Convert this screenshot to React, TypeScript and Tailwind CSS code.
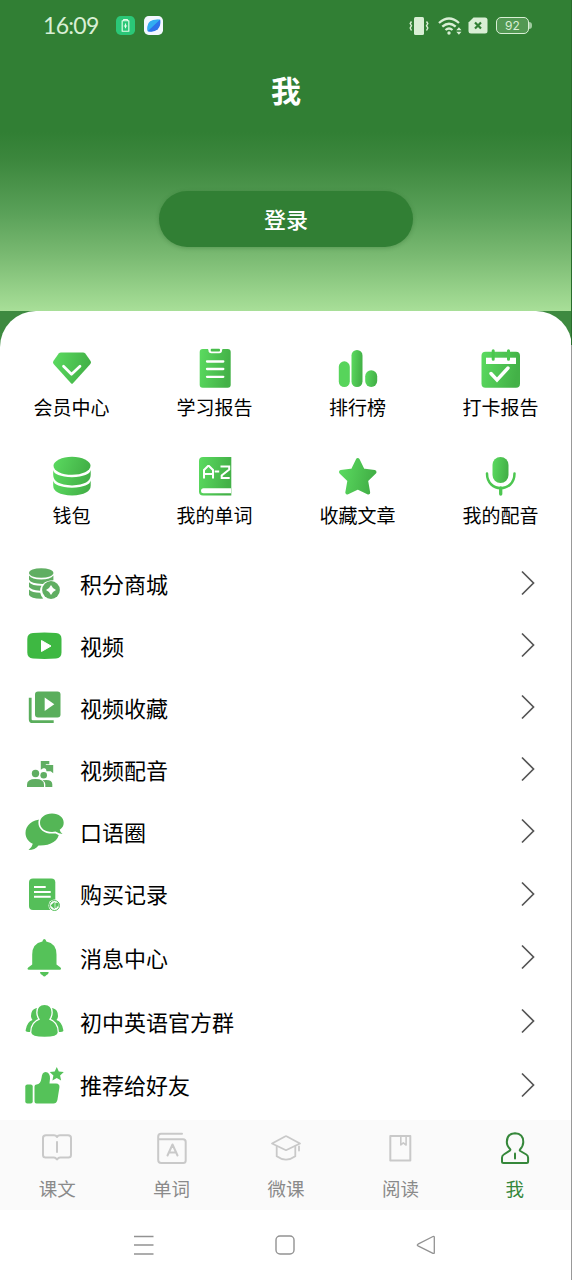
import React from "react";

type IconProps = { children: React.ReactNode };

const Icon40 = ({ children }: IconProps) => (
  <svg viewBox="0 0 40 40" className="size-10 shrink-0 overflow-visible">
    {children}
  </svg>
);

const Icon32 = ({ children }: IconProps) => (
  <svg
    viewBox="0 0 32 32"
    className="size-8 shrink-0 overflow-visible"
    fill="none"
    stroke="currentColor"
    strokeWidth="2"
    strokeLinejoin="round"
    strokeLinecap="round"
  >
    {children}
  </svg>
);

const G = "url(#leaf)";

const shortcuts = [
  {
    label: "会员中心",
    icon: (
      <>
        <path d="M9 4.500h22q1.400 0 2.300 1l5.300 7.500q1 1.500-.2 3L21 35.300q-1 1-2 0L1.600 16q-1.200-1.500-.2-3L6.700 5.500q.9-1 2.300-1z" fill={G} />
        <path d="M11.500 18.300l8 8 8.500-8" fill="none" stroke="#fff" strokeWidth="2.700" strokeLinecap="round" strokeLinejoin="round" />
      </>
    ),
  },
  {
    label: "学习报告",
    icon: (
      <>
        <rect x="4.700" y="1" width="31" height="38.700" rx="3" fill={G} />
        <path d="M11.500 0q2 .8 2 2.500 0 2.700 2.700 2.700h8q2.800 0 2.800-2.700 0-1.700 2-2.500z" fill="#fff" />
        <rect x="15.700" y=".8" width="9.300" height="2.700" rx=".9" fill="#48bd4b" />
        <path d="M12 13.500h16.300M12 21h16.300M12 28.800h16.300" stroke="#fff" strokeWidth="2.300" strokeLinecap="round" />
      </>
    ),
  },
  {
    label: "排行榜",
    icon: (
      <>
        <rect x=".8" y="13.300" width="11" height="25.700" rx="5.500" fill="#57d45b" />
        <rect x="13.500" y="2" width="11" height="37" rx="5.500" fill={G} />
        <rect x="27.200" y="22.300" width="12" height="16.700" rx="6" fill={G} />
      </>
    ),
  },
  {
    label: "打卡报告",
    icon: (
      <>
        <rect x=".5" y="3.700" width="38.500" height="36" rx="4" fill={G} />
        <path d="M5 9.700h30v6.300H5z" fill="#fff" />
        <path d="M12.200 2.800v8.500M27.500 2.800v8.500" stroke="#4ac64e" strokeWidth="3" strokeLinecap="round" />
        <path d="M10 25.500l6 6.500L27 20" fill="none" stroke="#fff" strokeWidth="3.400" strokeLinecap="round" />
      </>
    ),
  },
  {
    label: "钱包",
    icon: (
      <>
        <ellipse cx="20" cy="9.800" rx="18.500" ry="9" fill={G} />
        <path d="M1.200 14q1 6.500 18.800 7.200Q37.500 20.500 38.700 14v5q0 9.500-18.700 10.500Q1.200 28.500 1.200 19z" fill={G} />
        <path d="M1.200 24.500q1 6.500 18.800 7.200Q37.500 31 38.700 24.500v5q0 9-18.700 10Q1.200 38.500 1.200 29.500z" fill={G} />
      </>
    ),
  },
  {
    label: "我的单词",
    icon: (
      <>
        <path d="M8 1h28.300v38.500H8q-4 0-4-4V5q0-4 4-4z" fill={G} />
        <path d="M8.500 32.200H36v5H8.500a2.500 2.500 0 0 1 0-5z" fill="#fff" />
        <path d="M9 22.500V14l4-4h1l4 4v8.500M9 18h9M19.700 15.600h4.500M25.500 10.500h8.700v3l-7.500 6v2.500h8" fill="none" stroke="#fff" strokeWidth="2" />
      </>
    ),
  },
  {
    label: "收藏文章",
    icon: (
      <path d="M19.800 4l5.100 10.500L36.500 16 28 24.200 30.200 36.500 19.800 31.500 9.300 36.500 11.500 24.200 3 16 14.700 14.500z" fill={G} stroke={G} strokeWidth="4" strokeLinejoin="round" />
    ),
  },
  {
    label: "我的配音",
    icon: (
      <>
        <rect x="11.500" y="1" width="16" height="26" rx="8" fill={G} />
        <path d="M6 17.500C6 37 33.500 37 33.500 17.500" fill="none" stroke="#4cc650" strokeWidth="2.500" strokeLinecap="round" />
        <path d="M19.700 32v6" stroke="#4cc650" strokeWidth="3.300" strokeLinecap="round" />
      </>
    ),
  },
];

const rows = [
  {
    label: "积分商城",
    height: "h-[62px]",
    icon: (
      <g fill="#60ae62">
        <ellipse cx="17.200" cy="9" rx="12.200" ry="4.800" />
        <path d="M5 11.500q3 4 12.200 4t12.200-4v4.800q-7 0-10.500 3.600Q7 20 5 15.500z" />
        <path d="M5 18.300q3 3.500 12.500 3.500-1.500 2.200-1.500 4.900Q7 26 5 23z" />
        <path d="M5 25.500q3 3.200 11.200 3.200.6 3.300 3 5.900Q7 35 5 31z" />
        <circle cx="27" cy="26" r="8.900" />
        <path d="M27 21l2 3 3 2-3 2-2 3-2-3-3-2 3-2z" fill="#fff" />
      </g>
    ),
  },
  {
    label: "视频",
    height: "h-[62px]",
    icon: (
      <>
        <path d="M9 6.900q11.500-.6 23 0 5.500.4 5.500 6v13.700q0 5.500-5.500 6-11.500.7-23 0-5.700-.5-5.700-6V12.900q0-5.600 5.700-6z" fill="#3eb842" />
        <path d="M17.500 14.500v11l9.500-5.500z" fill="#fff" stroke="#fff" strokeWidth="1" strokeLinejoin="round" />
      </>
    ),
  },
  {
    label: "视频收藏",
    height: "h-[62px]",
    icon: (
      <>
        <rect x="11" y="3.500" width="25.500" height="26" rx="3" fill="#5aae5c" />
        <path d="M6.200 9.700v21.500q0 2.500 2.500 2.500h21" fill="none" stroke="#5aae5c" strokeWidth="2.800" />
        <path d="M20.700 9.500v13.500l9.600-6.700z" fill="#fff" />
      </>
    ),
  },
  {
    label: "视频配音",
    height: "h-[62px]",
    icon: (
      <g fill="#60ae62">
        <path d="M16.800 11h8.500v3.300h-3.500v4h-2.700l-2.300 1.500z" />
        <path d="M21 15h8.200v8.300l-2.500-2h-4.200q-.2-2.300-1.500-3z" />
        <circle cx="11.500" cy="23.500" r="3.700" />
        <circle cx="19.700" cy="25.200" r="3.300" />
        <path d="M3 37v-2.500q0-5.500 8.500-5.500t8.500 5.500V37z" />
        <path d="M18.500 30.200q9.800-1.500 9.800 4V37h-7v-3q0-2-2.800-3.800z" />
      </g>
    ),
  },
  {
    label: "口语圈",
    height: "h-[62px]",
    icon: (
      <>
        <path d="M18 7.500C8 7.500 1.500 13.700 1.500 21c0 5 3 8.600 7.300 10.800Q8 35.700 4.500 38q6.500 0 10-4.500C26 34 35 29 35 20.500 35 13 28 7.500 18 7.500z" fill="#54b656" />
        <path d="M28 1.500c-7 0-12 4-12 9.200 0 5.400 5 9.300 12 9.300l3.500-.4Q35 22 38.500 22q-2.300-1.700-2.800-4.300 4-2.700 4-7C39.700 5.500 35 1.500 28 1.500z" fill="#54b656" stroke="#fff" strokeWidth="3.200" paintOrder="stroke" />
      </>
    ),
  },
  {
    label: "购买记录",
    height: "h-[63px]",
    icon: (
      <>
        <rect x="5" y="3.500" width="26.300" height="31.500" rx="4" fill="#55bf59" />
        <path d="M10 12h11.700M10 17h16.700M10 21.700h16.700" stroke="#fff" strokeWidth="2" />
        <circle cx="30.500" cy="30.500" r="6" fill="#fff" />
        <circle cx="30.500" cy="30.500" r="5" fill="#fff" stroke="#55bf59" strokeWidth="1" />
        <path d="M27.500 30.500l2.500-2.200v4.500zM32 33v-4.500h2v2.300h-2" fill="#55bf59" stroke="#55bf59" strokeWidth="1.300" />
      </>
    ),
  },
  {
    label: "消息中心",
    height: "h-[64px]",
    icon: (
      <g fill="#55c259">
        <path d="M20.300 1q1.700 0 2 2.500 10.200 2 10.200 13v10l4 3q1.500 2-.7 2.300H4.800q-2.200-.5-.6-2.300l4-3v-10q0-11 10.200-13 .3-2.500 1.900-2.500z" />
        <path d="M16 34h8.700q0 2.700-2.500 3.200-1.800 2.800-3.700 0Q16 36.500 16 34z" />
      </g>
    ),
  },
  {
    label: "初中英语官方群",
    height: "h-[64px]",
    icon: (
      <g fill="#55c259">
        <path d="M7 14q0-6.500 5-7.800 3-.6 5 .8v12L9 25.200 6.800 30q-6 0-5.100-2Q3 19.700 8.500 18 7 16.500 7 14z" />
        <path d="M34 14q0-6.500-5-7.800-3-.6-5 .8v12l8 6.200 2.200 4.800q6 0 5.100-2-1.300-8.300-6.800-10 1.500-1.500 1.500-4z" />
        <path d="M20.500 3q-7 0-7 7.500 0 4 2.500 7-8.700 3-8.700 13 0 4.200 13.200 4.200t13.200-4.200q0-10-8.700-13 2.500-3 2.500-7Q27.500 3 20.500 3z" stroke="#fff" strokeWidth="2.600" paintOrder="stroke" />
      </g>
    ),
  },
  {
    label: "推荐给好友",
    height: "h-[63px]",
    icon: (
      <g fill="#55c259">
        <rect x="1.300" y="18.500" width="7.400" height="19" rx="2" />
        <path d="M12.500 18.500q4.200-.3 5-6.500.5-6 4-6 4.500.2 4.500 6.500l-.5 5H32q4 .3 3.400 4l-2 12.500q-.9 3.500-3.900 3.500h-17q-2 0-2-2V20.500q0-2 2-2z" />
        <path d="M32.800 1l2 4.500 5 .6-3.700 3.400 1 5-4.300-2.500-4.400 2.500 1-5-3.700-3.400 5-.6z" />
      </g>
    ),
  },
];

const tabs = [
  {
    label: "课文",
    icon: (
      <>
        <path d="M16 5q-1-1.700-3-1.700H5Q2 3.300 2 6v17q0 2.500 2.700 2.500H13q1.500 0 3 2 1.500-2 3-2h8.300q2.700 0 2.700-2.500V6q0-2.700-3-2.700h-8Q17 3.300 16 5z" />
        <path d="M16 10v10" />
      </>
    ),
  },
  {
    label: "单词",
    icon: (
      <>
        <path d="M26 1.700H5q-2.800 0-2.800 3V28q0 3 3 3h22q2.500 0 2.500-2.500V10q0-2.700-2.700-2.700H2.500" />
        <path d="M11.500 23.500l5-11 5 11M13 20.500h7" />
      </>
    ),
  },
  {
    label: "微课",
    icon: (
      <>
        <path d="M2 11.500L15.500 4.300q.5-.3 1 0L30 11.500 16.500 18q-.5.300-1 0z" strokeWidth="1.800" />
        <path d="M6.700 14.500v9.800Q16 31 25.300 24.300V14.500M29 14.500v4" strokeWidth="1.800" />
      </>
    ),
  },
  {
    label: "阅读",
    icon: (
      <>
        <path d="M6.300 4h20v24.500h-20z" />
        <path d="M16.800 4v9l2.500-2.200 2.800 2.200V4" strokeWidth="1.600" />
      </>
    ),
  },
  {
    label: "我",
    icon: (
      <>
        <path d="M16 1.300q-8.200.4-8.200 8.700 0 4 3.400 7.200.5.800-.4 1.500l-6 3.800q-1.800 1-1.800 3.200v3.800q0 1.500 1.500 1.500h23q1.600 0 1.600-1.500v-3.800q0-2.200-1.800-3.200l-6-3.500q-.9-.7-.3-1.500 3.300-3.500 3.300-7.500 0-8.300-8.300-8.700z" />
        <path d="M16 21.500v5" />
      </>
    ),
    active: true,
  },
];

function StatusBar() {
  return (
    <div className="flex h-[51px] items-center pl-[43px] pr-[40px] text-[#d9efd5]">
      <span className="w-[73px] font-['Lato','Noto_Sans_CJK_SC',sans-serif] text-[23px] leading-none tracking-[-0.7px]">16:09</span>
      <svg viewBox="0 0 20 20" className="size-[19px]">
        <rect width="20" height="20" rx="5" fill="#2bc777" />
        <path d="M8 4.500V3.700h4v.8M6.500 5h7v11h-7z" fill="none" stroke="#e4ffe9" strokeWidth="1.200" strokeLinejoin="round" />
        <path d="M10 8v5M8.300 10.500h3.400" stroke="#e4ffe9" strokeWidth="1.200" />
      </svg>
      <svg viewBox="0 0 20 20" className="ml-[9px] size-[19px]">
        <rect width="20" height="20" rx="5" fill="#f3f8ff" />
        <path d="M4 16q-1.500-6 2.500-9.500Q10 3.200 17 4q.5 6-3 9.500Q10.500 17.200 4 16z" fill="#278be9" />
        <path d="M4 16Q2.500 9 6.500 5.500 10 3.200 17 4z" fill="#32adf1" />
        <path d="M4 16L17 4q1 6.500-2.500 10-4 3.500-10.500 2z" fill="#2d72ea" />
      </svg>
      <div className="ml-auto flex items-center">
        <svg viewBox="0 0 20 18" className="h-[18px] w-5" fill="none" stroke="currentColor" strokeWidth="1.400">
          <rect x="5" y="0" width="10" height="18" rx="1.500" fill="currentColor" stroke="none" />
          <path d="M2.500 4.500l-1.300 2 1.300 2.200-1.300 2.300 1.300 2.500M17.500 4.500l1.300 2-1.300 2.200 1.300 2.300-1.300 2.500" />
        </svg>
        <svg viewBox="0 0 24 18" className="ml-[9px] h-[18px] w-6" fill="none" stroke="currentColor" strokeWidth="2.300">
          <path d="M1 6Q11 -3 21 6M4.300 9.700q6.700-6 13.400 0M7.500 13q3.500-3 7 0" />
          <circle cx="11" cy="16" r="1.700" fill="currentColor" stroke="none" />
          <path d="M18.300 13.300l2.600-3 2.600 3zM18.300 14.700l2.600 3 2.600-3z" fill="currentColor" stroke="none" />
        </svg>
        <svg viewBox="0 0 20 17" className="ml-[6px] h-[17px] w-5">
          <path d="M5.500.5H17Q19.500.5 19.500 3v11q0 2.500-2.500 2.500H3Q.5 16.500.5 14V5.500z" fill="currentColor" />
          <path d="M7 5.500l6 6M13 5.500l-6 6" stroke="#317f34" strokeWidth="2.200" />
        </svg>
        <div className="ml-2 flex h-[17px] w-[33px] items-center justify-center rounded-[5px] border-[1.500px] border-current bg-[#529853] font-['Inter',sans-serif] text-[12px] leading-none">92</div>
        <div className="h-[7px] w-[3px] rounded-r-sm bg-[#9fca9f]" />
      </div>
    </div>
  );
}

export default function App() {
  return (
    <div className="relative flex h-[1280px] w-[572px] flex-col overflow-hidden bg-white font-['Noto_Sans_CJK_SC',sans-serif] text-black">
      <svg width="0" height="0" className="absolute">
        <defs>
          <linearGradient id="leaf" x1="0" y1="0" x2="1" y2=".2">
            <stop offset="0" stopColor="#5bdb60" />
            <stop offset="1" stopColor="#43b147" />
          </linearGradient>
        </defs>
      </svg>

      <header className="h-[311px] shrink-0 bg-[linear-gradient(180deg,#317f34_0,#317f34_132px,#3c873d_160px,#59a058_212px,#7aba72_256px,#a8df98_311px)]">
        <StatusBar />
        <h1 className="flex h-[76px] items-center justify-center text-[30px] font-bold leading-none text-white">我</h1>
        <div className="flex justify-center pt-[64px]">
          <button className="h-14 w-[254px] rounded-full bg-[#317f34] pb-0.5 text-[22px] font-medium leading-none text-white shadow-[0_1px_4px_rgba(30,90,30,0.3)]">登录</button>
        </div>
      </header>

      <main className="h-[809px] shrink-0 bg-[linear-gradient(180deg,#3e8a40_0,#3e8a40_50px,#fff_50px)]">
        <div className="h-full rounded-t-[36px] bg-white">
          <section className="grid h-[242px] grid-cols-4 content-start gap-y-[38px] pt-[37px]">
            {shortcuts.map((s) => (
              <div key={s.label} className="flex h-[70px] flex-col items-center">
                <Icon40>{s.icon}</Icon40>
                <span className="mt-2 text-[19px] leading-[21px]">{s.label}</span>
              </div>
            ))}
          </section>
          <ul>
            {rows.map((r) => (
              <li key={r.label} className={`flex items-center pl-6 pr-[37px] ${r.height}`}>
                <Icon40>{r.icon}</Icon40>
                <span className="ml-4 flex-1 pb-[3px] text-[22px] leading-none">{r.label}</span>
                <svg viewBox="0 0 14 26" className="mb-0.5 h-[26px] w-3.5" fill="none" stroke="#555" strokeWidth="1.700">
                  <path d="M1 1.500L12.500 13 1 24.500" />
                </svg>
              </li>
            ))}
          </ul>
        </div>
      </main>

      <nav className="grid h-[90px] shrink-0 grid-cols-5 bg-[#fafafa] pt-3">
        {tabs.map((t) => (
          <div key={t.label} className={`flex flex-col items-center ${t.active ? "text-[#35873a]" : "text-[#c9c9c9]"}`}>
            <Icon32>{t.icon}</Icon32>
            <span className={`mt-[14px] text-[18.500px] leading-[21px] ${t.active ? "text-[#35873a]" : "text-[#8a8a8a]"}`}>{t.label}</span>
          </div>
        ))}
      </nav>

      <div className="flex h-[70px] shrink-0 items-center pl-[133px] text-[#929292]">
        <svg viewBox="0 0 22 22" className="size-[22px]" stroke="currentColor" strokeWidth="1.500">
          <path d="M1 2.500h19.500M1 11h19.500M1 20h19.500" />
        </svg>
        <svg viewBox="0 0 22 22" className="ml-[119px] size-[22px]" fill="none" stroke="currentColor" strokeWidth="1.400">
          <rect x="2" y="2" width="18" height="18" rx="4" />
        </svg>
        <svg viewBox="0 0 22 22" className="ml-[119px] size-[22px]" fill="none" stroke="currentColor" strokeWidth="1.300" strokeLinejoin="round">
          <path d="M3 10.200L18 2.500q1.300-.5 1.300 1v14.900q0 1.500-1.300.9L3 11.900q-1.500-.8 0-1.700z" />
        </svg>
      </div>

      <div className="absolute inset-y-0 right-0 w-px bg-[linear-gradient(180deg,#286c2c_0,#286c2c_345px,#999_345px)]" />
    </div>
  );
}
